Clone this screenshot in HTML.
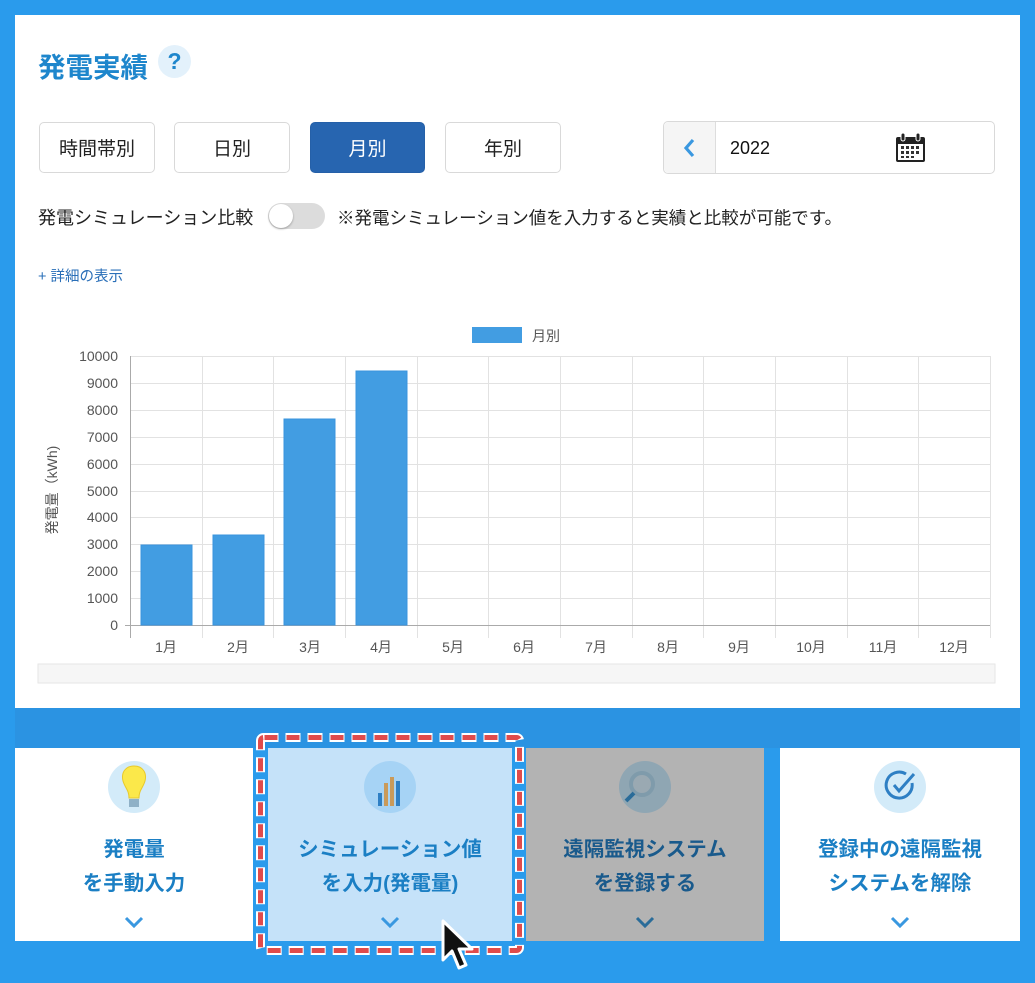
<!DOCTYPE html>
<html><head><meta charset="utf-8"><style>
*{margin:0;padding:0;box-sizing:border-box}
body{width:1035px;height:983px;background:#2a9bec;font-family:"Liberation Sans","Noto Sans CJK JP",sans-serif;position:relative;overflow:hidden}
.panel{position:absolute;left:15px;top:15px;width:1005px;height:693px;background:#fff}
.abs{position:absolute}
.btn{position:absolute;top:122px;height:51px;border:1px solid #d9d9d9;border-radius:5px;background:#fff;font-size:19px;color:#222;display:flex;align-items:center;justify-content:center}
.card{position:absolute;top:748px;height:193px;background:#fff;text-align:center}
.card .ic{position:absolute;left:50%;margin-left:-26px;top:13px;width:52px;height:52px;border-radius:50%;background:#d3ebf9}
.card .t{position:absolute;left:-10px;right:-10px;top:85px;font-size:20.5px;font-weight:bold;line-height:34px;color:#1b7fc4}
.card .chev{position:absolute;left:50%;margin-left:-10px;top:168px}
</style></head><body>
<div class="panel"></div>
<div class="abs" style="left:38px;top:45px;font-size:27.5px;font-weight:bold;color:#1e86cc">発電実績</div>
<div class="abs" style="left:158px;top:45px;width:33px;height:33px;border-radius:50%;background:#e3f1fb;color:#1e86cc;font-size:23px;font-weight:bold;text-align:center;line-height:33px">?</div>
<div class="btn" style="left:39px;width:116px">時間帯別</div>
<div class="btn" style="left:174px;width:116px">日別</div>
<div class="btn" style="left:310px;width:115px;background:#2765b0;border-color:#2560a8;color:#fff">月別</div>
<div class="btn" style="left:445px;width:116px">年別</div>
<div class="abs" style="left:663px;top:121px;width:332px;height:53px;border:1px solid #d9d9d9;border-radius:5px;background:#fff">
 <div class="abs" style="left:0;top:0;width:52px;height:51px;background:#f5f5f5;border-right:1px solid #ddd;border-radius:5px 0 0 5px"></div>
 <svg class="abs" style="left:18px;top:16px" width="14" height="20" viewBox="0 0 14 20"><path d="M11 2 L4 10 L11 18" stroke="#3a98e0" stroke-width="3.2" fill="none"/></svg>
 <div class="abs" style="left:66px;top:16px;font-size:18px;color:#111">2022</div>
 <svg class="abs" style="left:231px;top:11px" width="31" height="30" viewBox="0 0 31 30"><rect x="1" y="4" width="29" height="25" rx="2" fill="#222"/><rect x="3" y="11" width="25" height="16" fill="#fff"/><rect x="6" y="0" width="4" height="8" rx="2" fill="#222" stroke="#fff" stroke-width="1"/><rect x="21" y="0" width="4" height="8" rx="2" fill="#222" stroke="#fff" stroke-width="1"/><g fill="#333"><rect x="6" y="13" width="3" height="3"/><rect x="11" y="13" width="3" height="3"/><rect x="16" y="13" width="3" height="3"/><rect x="21" y="13" width="3" height="3"/><rect x="6" y="18" width="3" height="3"/><rect x="11" y="18" width="3" height="3"/><rect x="16" y="18" width="3" height="3"/><rect x="21" y="18" width="3" height="3"/><rect x="6" y="23" width="3" height="2"/><rect x="11" y="23" width="3" height="2"/><rect x="16" y="23" width="3" height="2"/></g></svg>
</div>
<div class="abs" style="left:38px;top:204px;font-size:18px;color:#222">発電シミュレーション比較</div>
<div class="abs" style="left:268px;top:203px;width:57px;height:26px;border-radius:13px;background:#dcdcdc"><div style="position:absolute;left:1px;top:1px;width:24px;height:24px;border-radius:50%;background:#fff;box-shadow:0 1px 2px rgba(0,0,0,.3)"></div></div>
<div class="abs" style="left:337px;top:205px;font-size:17.5px;color:#222;white-space:nowrap">※発電シミュレーション値を入力すると実績と比較が可能です。</div>
<div class="abs" style="left:38px;top:265px;font-size:14.5px;color:#2a6fb8">+ 詳細の表示</div>

<svg class="abs" style="left:0;top:0" width="1035" height="700">
 <rect x="472" y="327" width="50" height="16" fill="#429de2"/>
 <text x="532" y="341" font-size="14" fill="#555" font-family="Liberation Sans,Noto Sans CJK JP,sans-serif">月別</text>
 <g stroke="#e2e2e2" stroke-width="1">
  <line x1="130" y1="356.5" x2="990" y2="356.5"/><line x1="130" y1="383.5" x2="990" y2="383.5"/><line x1="130" y1="410.5" x2="990" y2="410.5"/><line x1="130" y1="437.5" x2="990" y2="437.5"/><line x1="130" y1="464.5" x2="990" y2="464.5"/><line x1="130" y1="491.5" x2="990" y2="491.5"/><line x1="130" y1="517.5" x2="990" y2="517.5"/><line x1="130" y1="544.5" x2="990" y2="544.5"/><line x1="130" y1="571.5" x2="990" y2="571.5"/><line x1="130" y1="598.5" x2="990" y2="598.5"/>
  <line x1="202.5" y1="356" x2="202.5" y2="638"/><line x1="273.5" y1="356" x2="273.5" y2="638"/><line x1="345.5" y1="356" x2="345.5" y2="638"/><line x1="417.5" y1="356" x2="417.5" y2="638"/><line x1="488.5" y1="356" x2="488.5" y2="638"/><line x1="560.5" y1="356" x2="560.5" y2="638"/><line x1="632.5" y1="356" x2="632.5" y2="638"/><line x1="703.5" y1="356" x2="703.5" y2="638"/><line x1="775.5" y1="356" x2="775.5" y2="638"/><line x1="847.5" y1="356" x2="847.5" y2="638"/><line x1="918.5" y1="356" x2="918.5" y2="638"/><line x1="990.5" y1="356" x2="990.5" y2="638"/>
 </g>
 <line x1="130.5" y1="356" x2="130.5" y2="638" stroke="#aaa"/>
 <line x1="125" y1="625.5" x2="990" y2="625.5" stroke="#aaa"/>
 <g fill="#429de2" stroke="#3a94dd"><rect x="141" y="545" width="51" height="80"/><rect x="213" y="535" width="51" height="90"/><rect x="284" y="419" width="51" height="206"/><rect x="356" y="371" width="51" height="254"/></g>
 <g font-size="14" fill="#555" text-anchor="end" font-family="Liberation Sans,sans-serif">
  <text x="118" y="361">10000</text><text x="118" y="388">9000</text><text x="118" y="415">8000</text><text x="118" y="442">7000</text><text x="118" y="469">6000</text><text x="118" y="496">5000</text><text x="118" y="522">4000</text><text x="118" y="549">3000</text><text x="118" y="576">2000</text><text x="118" y="603">1000</text><text x="118" y="630">0</text>
 </g>
 <g font-size="14" fill="#555" text-anchor="middle" font-family="Liberation Sans,Noto Sans CJK JP,sans-serif">
  <text x="166" y="652">1月</text><text x="238" y="652">2月</text><text x="310" y="652">3月</text><text x="381" y="652">4月</text><text x="453" y="652">5月</text><text x="524" y="652">6月</text><text x="596" y="652">7月</text><text x="668" y="652">8月</text><text x="739" y="652">9月</text><text x="811" y="652">10月</text><text x="883" y="652">11月</text><text x="954" y="652">12月</text>
 </g>
 <text transform="translate(57,490) rotate(-90)" font-size="14" fill="#555" text-anchor="middle" font-family="Liberation Sans,Noto Sans CJK JP,sans-serif">発電量（kWh)</text>
 <rect x="38" y="664" width="957" height="19" fill="#f6f6f6" stroke="#e6e6e6"/>
</svg>

<div class="abs" style="left:15px;top:708px;width:1005px;height:40px;background:#2b93e2"></div>

<div class="card" style="left:15px;width:238px"><div class="ic"></div>
 <svg class="abs" style="left:104px;top:12px" width="30" height="54" viewBox="0 0 30 54"><path d="M15 6 C6 6 2 13 4 21 C6 28 10 30 10 38 L20 38 C20 30 24 28 26 21 C28 13 24 6 15 6Z" fill="#fbe84a" stroke="#e8c92a"/><rect x="10" y="39" width="10" height="8" fill="#8fb1c7"/></svg>
 <div class="t">発電量<br>を手動入力</div>
 <svg class="chev" width="20" height="12" viewBox="0 0 20 12"><path d="M2 2 L10 10 L18 2" stroke="#3a98e0" stroke-width="3" fill="none"/></svg></div>
<div class="card" style="left:268px;width:244px;background:#c5e2f9"><div class="ic" style="background:#a6d3f5"></div>
 <svg class="abs" style="left:108px;top:25px" width="28" height="35"><rect x="2" y="20" width="4" height="13" fill="#2e7fc4"/><rect x="8" y="10" width="4" height="23" fill="#c99a5a"/><rect x="14" y="4" width="4" height="29" fill="#c99a5a"/><rect x="20" y="8" width="4" height="25" fill="#2e7fc4"/></svg>
 <div class="t">シミュレーション値<br>を入力(発電量)</div>
 <svg class="chev" width="20" height="12" viewBox="0 0 20 12"><path d="M2 2 L10 10 L18 2" stroke="#3a98e0" stroke-width="3" fill="none"/></svg></div>
<div class="card" style="left:526px;width:238px;background:#b3b3b3"><div class="ic" style="background:#8fa6b3"></div>
 <svg class="abs" style="left:92px;top:18px" width="44" height="44"><circle cx="24" cy="18" r="11" fill="#9aa9b2" stroke="#7f9bab" stroke-width="4"/><path d="M16 27 L8 35" stroke="#2a6c99" stroke-width="4"/></svg>
 <div class="t" style="color:#195a8c">遠隔監視システム<br>を登録する</div>
 <svg class="chev" width="20" height="12" viewBox="0 0 20 12"><path d="M2 2 L10 10 L18 2" stroke="#2a6c99" stroke-width="3" fill="none"/></svg></div>
<div class="card" style="left:780px;width:240px"><div class="ic"></div>
 <svg class="abs" style="left:104px;top:21px" width="34" height="34" viewBox="0 0 34 34"><path d="M28 14 A13 13 0 1 1 22 5" stroke="#2e7fc4" stroke-width="3" fill="none"/><path d="M10 16 L15 22 L30 5" stroke="#2e7fc4" stroke-width="3" fill="none"/></svg>
 <div class="t">登録中の遠隔監視<br>システムを解除</div>
 <svg class="chev" width="20" height="12" viewBox="0 0 20 12"><path d="M2 2 L10 10 L18 2" stroke="#3a98e0" stroke-width="3" fill="none"/></svg></div>

<svg class="abs" style="left:255px;top:732px" width="270" height="224">
 <rect x="5.5" y="5.5" width="259" height="213" rx="3" fill="none" stroke="#fff" stroke-width="9" stroke-dasharray="15 7"/>
 <rect x="5.5" y="5.5" width="259" height="213" rx="3" fill="none" stroke="#e04b4b" stroke-width="5" stroke-dasharray="13 9" stroke-dashoffset="-1"/>
</svg>
<svg class="abs" style="left:440px;top:918px" width="40" height="56" viewBox="0 0 40 56"><path d="M3 3 L3 42 L12 33 L19 50 L26 47 L19 31 L32 31 Z" fill="#111" stroke="#fff" stroke-width="3" stroke-linejoin="round"/></svg>
</body></html>
